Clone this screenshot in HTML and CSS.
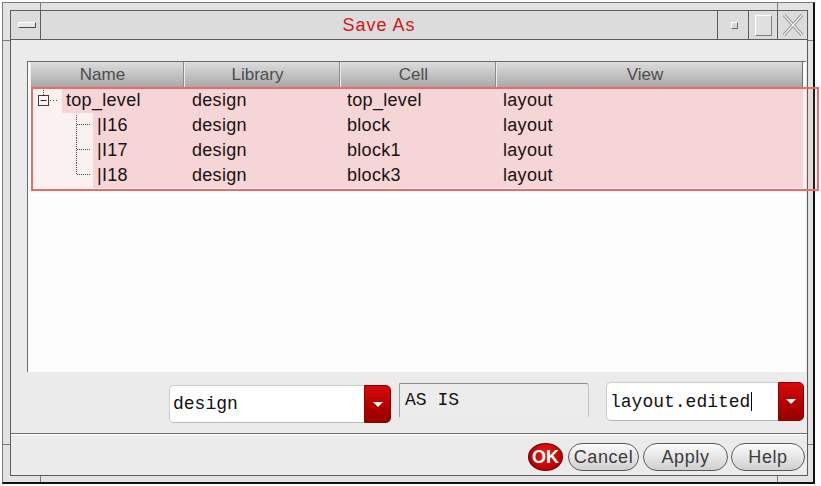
FILE: index.html
```html
<!DOCTYPE html>
<html>
<head>
<meta charset="utf-8">
<title>Save As</title>
<link rel="stylesheet" href="styles.css">
</head>
<body>
<div class="frame">
  <span class="mark mark-t1"></span>
  <span class="mark mark-t2"></span>
  <span class="mark mark-b1"></span>
  <span class="mark mark-b2"></span>
  <span class="mark mark-l1"></span>
  <span class="mark mark-l2"></span>
  <span class="mark mark-r1"></span>
  <span class="mark mark-r2"></span>
  <div class="win">
    <div class="titlebar">
      <div class="tb-menu"><span class="menu-bar"></span></div>
      <div class="tb-title">Save As</div>
      <div class="tb-btn tb-min"><span class="mini"></span></div>
      <div class="tb-btn tb-max"><span class="maxsq"></span></div>
      <div class="tb-btn tb-close">
        <svg width="22" height="22" viewBox="0 0 22 22">
          <path d="M2 1 L20 21 M20 1 L2 21" stroke="#8a8a8a" stroke-width="3.2" fill="none"/>
          <path d="M2 1 L20 21 M20 1 L2 21" stroke="#f2f2f2" stroke-width="1.4" fill="none"/>
        </svg>
      </div>
    </div>
    <div class="content">
      <div class="list">
        <div class="hdr">
          <div class="hc">Name</div>
          <div class="hc">Library</div>
          <div class="hc">Cell</div>
          <div class="hc hc-last">View</div>
        </div>
        <div class="row">
          <div class="name">
            <svg class="tree" width="32" height="25" viewBox="0 0 32 25">
              <path d="M13.5 0 V7" stroke="#444" stroke-width="1" stroke-dasharray="1 1" fill="none"/>
              <rect x="8.5" y="7.5" width="10" height="10" fill="#fff" stroke="#333"/>
              <path d="M10.5 12.5 H16.5" stroke="#222" stroke-width="1"/>
              <path d="M20 12.5 H28" stroke="#444" stroke-width="1" stroke-dasharray="1 2" fill="none"/>
            </svg>
            <span class="sel">top_level</span>
          </div>
          <div class="cell lib">design</div>
          <div class="cell">top_level</div>
          <div class="cell">layout</div>
        </div>
        <div class="row">
          <div class="name">
            <svg class="tree" width="63" height="25" viewBox="0 0 63 25">
              <path d="M46.5 2 V25 M47 11.5 H61" stroke="#444" stroke-width="1" stroke-dasharray="1 1" fill="none"/>
            </svg>
            <span class="sel">|I16</span>
          </div>
          <div class="cell lib">design</div>
          <div class="cell">block</div>
          <div class="cell">layout</div>
        </div>
        <div class="row">
          <div class="name">
            <svg class="tree" width="63" height="25" viewBox="0 0 63 25">
              <path d="M46.5 0 V25 M47 11.5 H61" stroke="#444" stroke-width="1" stroke-dasharray="1 1" fill="none"/>
            </svg>
            <span class="sel">|I17</span>
          </div>
          <div class="cell lib">design</div>
          <div class="cell">block1</div>
          <div class="cell">layout</div>
        </div>
        <div class="row">
          <div class="name">
            <svg class="tree" width="63" height="25" viewBox="0 0 63 25">
              <path d="M46.5 0 V12 M47 11.5 H61" stroke="#444" stroke-width="1" stroke-dasharray="1 1" fill="none"/>
            </svg>
            <span class="sel">|I18</span>
          </div>
          <div class="cell lib">design</div>
          <div class="cell">block3</div>
          <div class="cell">layout</div>
        </div>
      </div>

      <div class="fields">
        <div class="combo combo-lib">
          <div class="cb-field">design</div>
          <div class="cb-btn"><span class="tri"></span></div>
        </div>
        <div class="asis">AS IS</div>
        <div class="combo combo-view">
          <div class="cb-field">layout.edited<span class="caret"></span></div>
          <div class="cb-btn"><span class="tri"></span></div>
        </div>
      </div>

      <div class="sep"></div>

      <div class="buttons">
        <div class="btn ok">OK</div>
        <div class="btn btn-cancel">Cancel</div>
        <div class="btn btn-apply">Apply</div>
        <div class="btn btn-help">Help</div>
      </div>
    </div>
  </div>
  <div class="annot"></div>
</div>
</body>
</html>
```

FILE: styles.css
```css
body {
  margin: 0;
  background: #ffffff;
  font-family: "Liberation Sans", Arial, sans-serif;
}

.frame {
  position: relative;
  box-sizing: border-box;
  margin: 2px 0 0 2px;
  width: 813px;
  height: 482px;
  border-top: 1px solid #7a7a7a;
  border-left: 1px solid #7a7a7a;
  border-right: 2px solid #111111;
  border-bottom: 2px solid #111111;
  padding: 7px 5px 6px 7px;
  background: #e3e3e3;
}

.mark {
  position: absolute;
  background: #7a7a7a;
}
.mark-t1 { left: 37px; top: 0; width: 1px; height: 7px; }
.mark-t2 { left: 774px; top: 0; width: 1px; height: 7px; }
.mark-b1 { left: 37px; top: 473px; width: 1px; height: 6px; }
.mark-b2 { left: 774px; top: 473px; width: 1px; height: 6px; }
.mark-l1 { left: 0; top: 37px; width: 7px; height: 1px; }
.mark-l2 { left: 0; top: 441px; width: 7px; height: 1px; }
.mark-r1 { left: 805px; top: 37px; width: 5px; height: 1px; }
.mark-r2 { left: 805px; top: 441px; width: 5px; height: 1px; }

.win {
  box-sizing: border-box;
  height: 100%;
  border: 1px solid #5c5c5c;
  display: flex;
  flex-direction: column;
  background: #ebebeb;
}

/* title bar */
.titlebar {
  display: flex;
  height: 28px;
  flex: none;
  border-bottom: 1px solid #5c5c5c;
  background: #dcdcdc;
}
.tb-menu {
  width: 29px;
  border-right: 1px solid #5c5c5c;
  display: flex;
  align-items: center;
  justify-content: center;
}
.menu-bar {
  width: 16px;
  height: 4px;
  border: 1px solid;
  border-color: #ffffff #4a4a4a #4a4a4a #ffffff;
  background: #e6e6e6;
  margin-left: 2px;
}
.tb-title {
  flex: 1;
  text-align: center;
  color: #d01818;
  font-size: 18px;
  letter-spacing: 1px;
  line-height: 28px;
}
.tb-btn {
  box-sizing: border-box;
  border-left: 1px solid #5c5c5c;
  display: flex;
  align-items: center;
  justify-content: center;
}
.tb-min { width: 31px; }
.tb-max { width: 29px; }
.tb-close { width: 30px; }
.mini {
  width: 5px;
  height: 5px;
  border: 1px solid;
  border-color: #ffffff #6a6a6a #6a6a6a #ffffff;
  background: #d8d8d8;
  margin-left: 2px;
}
.maxsq {
  width: 15px;
  height: 19px;
  border: 1px solid;
  border-color: #ffffff #808080 #808080 #ffffff;
  background: #e0e0e0;
}

/* content */
.content {
  flex: 1;
  display: flex;
  flex-direction: column;
  padding-top: 21px;
}

.list {
  box-sizing: border-box;
  height: 311px;
  flex: none;
  margin-left: 16px;
  margin-right: 1px;
  background: #fcfcfc;
  border-top: 1px solid #6a6a6a;
  border-left: 1px solid #6a6a6a;
  padding: 0 3px 0 2px;
}

.hdr {
  display: grid;
  grid-template-columns: 154px 156px 156px 1fr;
  height: 26px;
  background: linear-gradient(#dcdcdc, #bdbdbd 60%, #a6a6a6);
}
.hc {
  box-sizing: border-box;
  text-align: center;
  line-height: 26px;
  font-size: 17px;
  color: #4d4d4d;
  border-right: 1px solid #8a8a8a;
  box-shadow: inset 1px 0 #ececec;
  padding-right: 8px;
}
.hc-last {
  border-right: 1px solid #707070;
}

.row {
  display: grid;
  grid-template-columns: 154px 156px 156px 1fr;
  height: 25px;
  line-height: 25px;
  font-size: 18px;
  letter-spacing: 0.3px;
  color: #0a0a0a;
}
.name {
  display: flex;
}
.tree {
  display: block;
  flex: none;
}
.sel {
  flex: 1;
  background: #f7dede;
  padding-left: 4px;
}
.cell {
  background: #f7dede;
  padding-left: 7px;
}
.cell.lib {
  padding-left: 8px;
}

/* field row */
.fields {
  display: flex;
  align-items: flex-start;
  height: 41px;
  flex: none;
  margin-top: 10px;
  padding-left: 158px;
}
.combo {
  display: flex;
  box-sizing: border-box;
}
.combo-lib {
  width: 222px;
  height: 38px;
  margin-top: 3px;
}
.combo-view {
  width: 198px;
  height: 39px;
  margin-left: 17px;
}
.cb-field {
  flex: 1;
  display: flex;
  align-items: center;
  background: #ffffff;
  border: 1px solid #cccccc;
  border-right: 0;
  border-bottom-color: #b8b8b8;
  border-radius: 5px 0 0 5px;
  padding-left: 3px;
  font-family: "Liberation Mono", "Courier New", monospace;
  font-size: 18px;
  color: #111111;
}
.caret {
  display: inline-block;
  width: 1px;
  height: 19px;
  background: #000000;
  margin-left: 1px;
}
.cb-btn {
  box-sizing: border-box;
  width: 27px;
  display: flex;
  align-items: center;
  justify-content: center;
  background: linear-gradient(#d80a0a, #b00000 60%, #980000);
  border: 1px solid #8a0000;
  border-radius: 0 5px 5px 0;
}
.combo-view .cb-btn {
  width: 26px;
}
.tri {
  width: 0;
  height: 0;
  border-left: 5px solid transparent;
  border-right: 5px solid transparent;
  border-top: 5px solid #ffffff;
}
.asis {
  box-sizing: border-box;
  width: 190px;
  height: 34px;
  margin: 1px 0 0 8px;
  border-top: 1px solid #8c8c8c;
  border-left: 1px solid #a0a0a0;
  border-right: 1px solid #c4c4c4;
  border-radius: 0 3px 0 0;
  background: #ececec;
  padding-left: 5px;
  line-height: 32px;
  font-family: "Liberation Mono", "Courier New", monospace;
  font-size: 18px;
  color: #111111;
}

.sep {
  flex: none;
  margin-top: 10px;
  border-top: 1px solid #6e6e6e;
  border-bottom: 1px solid #ffffff;
}

.buttons {
  display: flex;
  justify-content: flex-end;
  margin-top: 8px;
  padding-right: 2px;
}
.btn {
  box-sizing: border-box;
  height: 28px;
  border: 1px solid #5a5a5a;
  border-radius: 14px;
  background: linear-gradient(#fbfbfb, #e6e6e6 50%, #cfcfcf);
  display: flex;
  align-items: center;
  justify-content: center;
  font-size: 18px;
  letter-spacing: 0.6px;
  color: #3c3c3c;
}
.ok {
  width: 35px;
  border-radius: 50%;
  border: 1px solid #6a0000;
  background: radial-gradient(ellipse at 50% 35%, #e41c1c, #b80000 70%, #900000);
  color: #ffffff;
  font-weight: bold;
  letter-spacing: 0;
}
.btn-cancel { width: 71px; margin-left: 5px; }
.btn-apply { width: 85px; margin-left: 4px; }
.btn-help { width: 74px; margin-left: 3px; }

/* annotation overlay */
.annot {
  position: absolute;
  left: 28px;
  top: 84px;
  width: 788px;
  height: 104px;
  box-sizing: border-box;
  border: 2px solid #ee6a6a;
  background: rgba(235, 120, 120, 0.08);
  pointer-events: none;
}
```
